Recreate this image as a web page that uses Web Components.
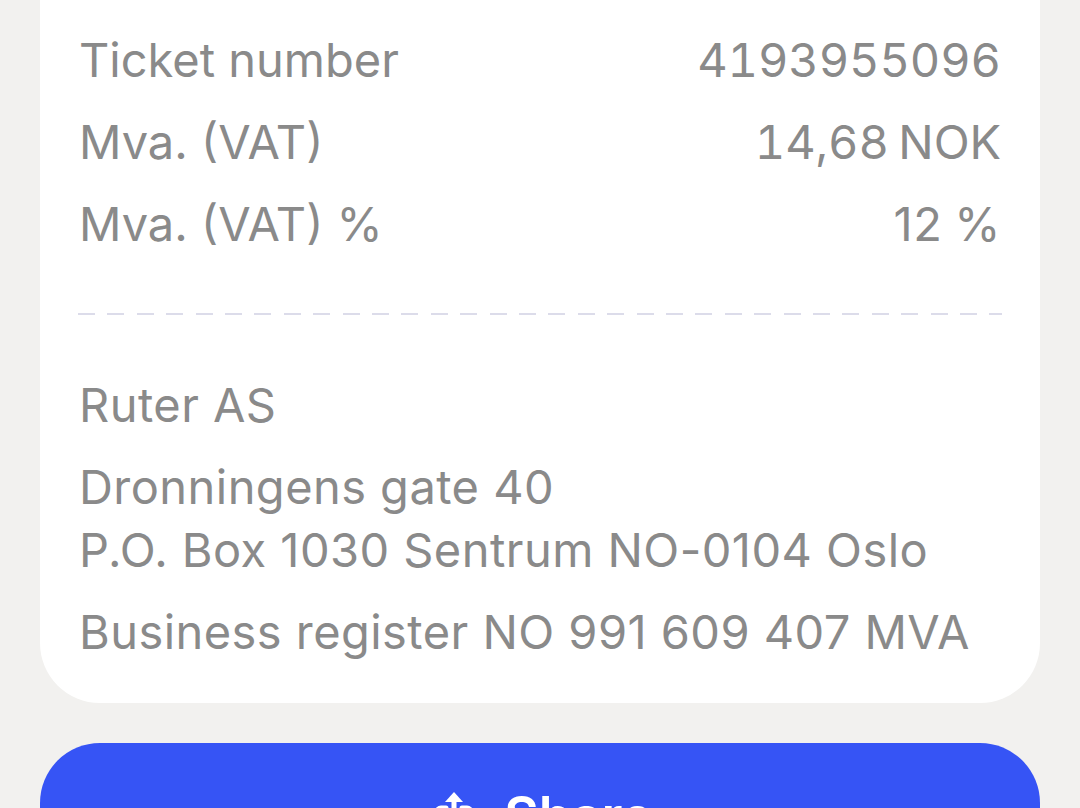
<!DOCTYPE html>
<html>
<head>
<meta charset="utf-8">
<title>Ticket receipt</title>
<style>
    html, body { margin: 0; height: 100%; }
    body { background: #f2f1ef; overflow: hidden; font-family: Inter, "Liberation Sans", sans-serif; }
</style>
</head>
<body>
<receipt-page>
    <receipt-card>
        <receipt-row label="Ticket number" value="4193955096"></receipt-row>
        <receipt-row label="Mva. (VAT)" value="14,68 NOK"></receipt-row>
        <receipt-row label="Mva. (VAT) %" value="12 %" plain></receipt-row>
        <dashed-rule></dashed-rule>
        <receipt-note>Ruter AS</receipt-note>
        <receipt-note>Dronningens gate 40<br>P.O. Box 1030 Sentrum NO-0104 Oslo</receipt-note>
        <receipt-note>Business register NO 991 609 407 MVA</receipt-note>
    </receipt-card>
    <share-button>Share</share-button>
</receipt-page>
<script>
class ReceiptPage extends HTMLElement {
    constructor() {
        super();
        this.attachShadow({mode: 'open'});
        this.shadowRoot.innerHTML = `
            <style>
                :host { display: flex; flex-direction: column; gap: 40px; height: 808px; padding: 0 40px; box-sizing: border-box; overflow: hidden; }
            </style>
            <slot></slot>
        `;
    }
}
class ReceiptCard extends HTMLElement {
    constructor() {
        super();
        this.attachShadow({mode: 'open'});
        this.shadowRoot.innerHTML = `
            <style>
                :host { display: flex; flex-direction: column; flex: none; height: 703px; box-sizing: border-box; padding: 19px 39px 0 39px; background: #fff; border-radius: 0 0 60px 60px; color: #8a8a8a; }
            </style>
            <slot></slot>
        `;
    }
}
class ReceiptRow extends HTMLElement {
    constructor() {
        super();
        this.attachShadow({mode: 'open'});
        this.shadowRoot.innerHTML = `
            <style>
                :host { display: flex; justify-content: space-between; height: 82px; font-size: 47px; line-height: 82px; white-space: nowrap; }
                .value { font-variant-numeric: tabular-nums; letter-spacing: -0.1px; word-spacing: -3px; }
                :host([plain]) .value { font-variant-numeric: normal; letter-spacing: 0.6px; word-spacing: -2px; }
            </style>
            <span>${this.getAttribute('label')}</span>
            <span class="value">${this.getAttribute('value')}</span>
        `;
    }
}
class DashedRule extends HTMLElement {
    constructor() {
        super();
        this.attachShadow({mode: 'open'});
        this.shadowRoot.innerHTML = `
            <style>
                :host { display: block; height: 2px; margin: 48px -1px 58px -1px; background: repeating-linear-gradient(90deg, #dcdcea 0 17px, transparent 17px 29.4px); }
            </style>
        `;
    }
}
class ReceiptNote extends HTMLElement {
    constructor() {
        super();
        this.attachShadow({mode: 'open'});
        this.shadowRoot.innerHTML = `
            <style>
                :host { display: block; font-size: 47px; line-height: 63px; margin-bottom: 19px; letter-spacing: 0.45px; white-space: nowrap; }
            </style>
            <slot></slot>
        `;
    }
}
class ShareButton extends HTMLElement {
    constructor() {
        super();
        this.attachShadow({mode: 'open'});
        this.shadowRoot.innerHTML = `
            <style>
                :host { display: flex; flex: none; justify-content: center; align-items: center; gap: 30px; height: 146px; padding-left: 7px; background: #3654f5; border-radius: 60px; color: #fff; font-size: 53px; font-weight: 600; }
                svg { width: 40px; height: 50px; flex: none; margin-top: 2px; }
            </style>
            <svg viewBox="0 0 40 50" fill="none" stroke="#fff" stroke-width="5" stroke-linecap="round" stroke-linejoin="round">
                <path d="M20 30V8"/>
                <path d="M20 0L29 10H11Z" fill="#fff" stroke="none"/>
                <path d="M12 16H7a4 4 0 0 0-4 4v24a4 4 0 0 0 4 4h26a4 4 0 0 0 4-4V20a4 4 0 0 0-4-4h-5"/>
            </svg>
            <span><slot></slot></span>
        `;
    }
}
customElements.define('receipt-page', ReceiptPage);
customElements.define('receipt-card', ReceiptCard);
customElements.define('receipt-row', ReceiptRow);
customElements.define('dashed-rule', DashedRule);
customElements.define('receipt-note', ReceiptNote);
customElements.define('share-button', ShareButton);
</script>
</body>
</html>
